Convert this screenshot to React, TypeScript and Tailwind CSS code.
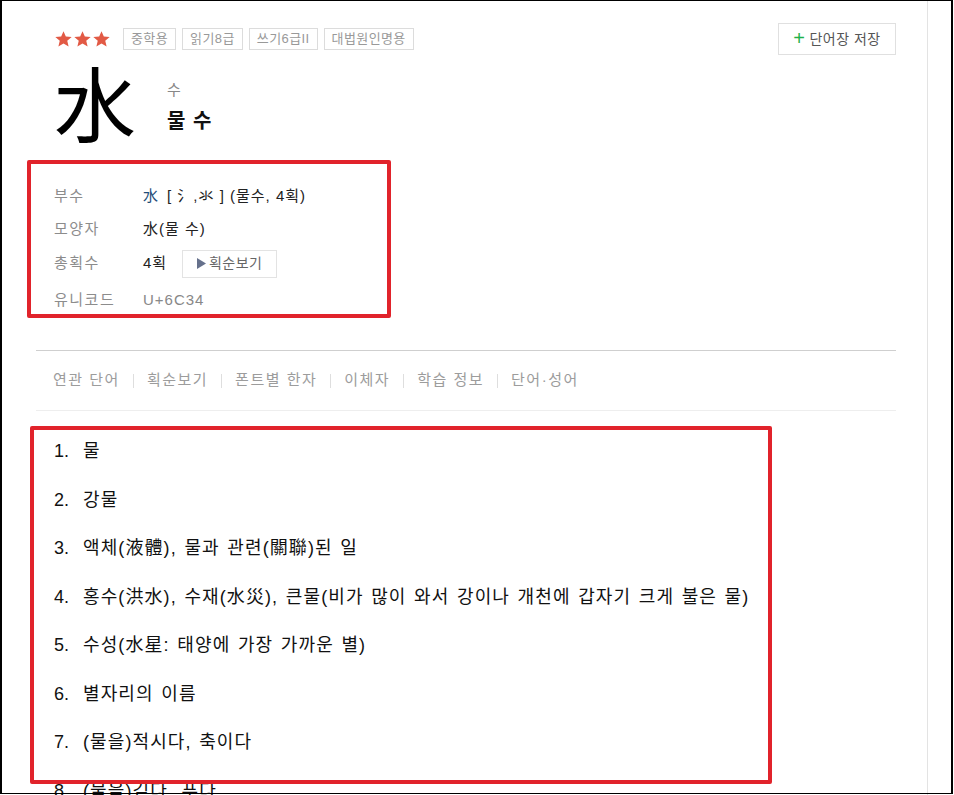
import React from 'react';

const FONT = 'font-["Liberation_Sans","Noto_Sans_CJK_KR",sans-serif]';

const tags = ['중학용', '읽기8급', '쓰기6급II', '대법원인명용'];
const tabs = ['연관 단어', '획순보기', '폰트별 한자', '이체자', '학습 정보', '단어·성어'];
const meanings = [
  '물',
  '강물',
  '액체(液體), 물과 관련(關聯)된 일',
  '홍수(洪水), 수재(水災), 큰물(비가 많이 와서 강이나 개천에 갑자기 크게 불은 물)',
  '수성(水星: 태양에 가장 가까운 별)',
  '별자리의 이름',
  '(물을)적시다, 축이다',
  '(물을)긷다, 푸다',
];

const Star = () => (
  <svg width="19" height="18" viewBox="0 0 24 24">
    <path d="M12 1.5l3.1 7.2 7.8.6-5.9 5.1 1.8 7.6L12 18l-6.8 4 1.8-7.6-5.9-5.1 7.8-.6z" fill="#e25a45" />
  </svg>
);

const InfoRow = ({ label, children, className = '' }: { label: string; children: React.ReactNode; className?: string }) => (
  <div className={`flex items-center h-[33px] ${className}`}>
    <span className="w-[89px] text-[15px] tracking-[1.5px] text-[#8c8c8c]">{label}</span>
    <div className="flex items-center text-[15px] tracking-[1px] text-[#222]">{children}</div>
  </div>
);

export default function App() {
  return (
    <div className={`relative w-[954px] h-[795px] overflow-hidden bg-white ${FONT}`}>
      <div className="w-[928px] h-full border-r border-[#e3e3e3] pl-[36px] pr-[31px]">
        {/* header */}
        <div className="pt-[23px] pl-[18px] flex items-center justify-between h-[55px]">
          <div className="flex items-center">
            <div className="flex items-center">
              <Star />
              <Star />
              <Star />
            </div>
            <div className="flex items-center gap-[6px] ml-[12px]">
              {tags.map(t => (
                <span key={t} className="h-[22px] px-[7px] border border-[#dcdcdc] text-[13px] tracking-[0.4px] text-[#999] flex items-center">
                  {t}
                </span>
              ))}
            </div>
          </div>
          <button className="h-[32px] w-[118px] border border-[#e0e0e0] flex items-center justify-center gap-[4px] text-[14px] tracking-[0.5px] text-[#555]">
            <span className="text-[20px] leading-none text-[#1fb14a] mt-[-2px]">+</span>
            단어장 저장
          </button>
        </div>

        {/* hanja */}
        <div className="mt-[5px] pl-[18px] flex items-start">
          <span className="text-[82px] leading-none font-['Noto_Sans_CJK_KR',sans-serif] text-black w-[82px]">水</span>
          <div className="ml-[31px] pt-[20px] flex flex-col">
            <span className="text-[15px] leading-[20px] text-[#888]">수</span>
            <span className="mt-[9px] text-[20px] leading-[24px] font-semibold tracking-[1px] text-[#111]">물 수</span>
          </div>
        </div>

        {/* info */}
        <div className="relative mt-[38px] ml-[18px]">
          <InfoRow label="부수">
            <span className="text-[#1f4e79]">水</span>
            <span className="ml-[8px] text-[#222]">[ 氵,氺 ] (물수, 4획)</span>
          </InfoRow>
          <InfoRow label="모양자">水(물 수)</InfoRow>
          <InfoRow label="총획수" className="h-[35px]">
            4획
            <button className="ml-[15px] h-[28px] w-[95px] border border-[#e3e3e3] flex items-center justify-center gap-[3px] text-[14px] tracking-[0.5px] text-[#666]">
              <svg width="9" height="11" viewBox="0 0 9 11">
                <path d="M0 0 L9 5.5 L0 11 Z" fill="#66718c" />
              </svg>
              획순보기
            </button>
          </InfoRow>
          <InfoRow label="유니코드" className="pt-[6px]">
            <span className="text-[#888]">U+6C34</span>
          </InfoRow>
          <div className="absolute left-[-27px] top-[-20px] w-[364px] h-[158px] border-4 border-[#e1232b] rounded-[2px] pointer-events-none" />
        </div>

        {/* tabs */}
        <div className="mt-[36px] border-t border-[#cfcfcf]">
          <div className="h-[59px] pl-[17px] flex items-center text-[15px] tracking-[1.5px] text-[#9c9c9c]">
            {tabs.map((t, i) => (
              <React.Fragment key={t}>
                {i > 0 && <span className="mx-[13px] w-px h-[14px] bg-[#dedede]" />}
                <span>{t}</span>
              </React.Fragment>
            ))}
          </div>
        </div>
        <div className="border-t border-[#eeeeee]" />

        {/* meanings */}
        <div className="relative mt-[28px] ml-[18px]">
          <ol className="flex flex-col gap-[24.57px]">
            {meanings.map((m, i) => (
              <li key={i} className="h-[24px] leading-[24px] flex text-[18px] text-[#111]">
                <span className="w-[29px]">{i + 1}.</span>
                <span className="whitespace-nowrap tracking-[1.1px] [word-spacing:1.5px]">{m}</span>
              </li>
            ))}
          </ol>
          <div className="absolute left-[-24px] top-[-13px] w-[742px] h-[358px] border-4 border-[#e1232b] rounded-[2px] pointer-events-none" />
        </div>
      </div>

      {/* screenshot frame */}
      <div className="absolute left-0 top-0 w-[953px] h-[794px] border-l-2 border-t border-r-2 border-b border-black pointer-events-none" />
    </div>
  );
}
